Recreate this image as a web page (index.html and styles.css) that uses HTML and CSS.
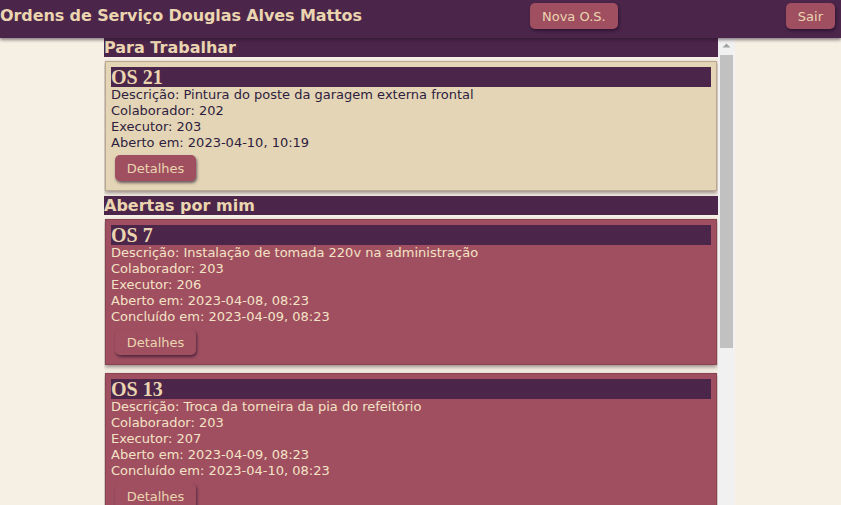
FILE: index.html
```html
<!DOCTYPE html>
<html lang="pt-BR">
<head>
<meta charset="utf-8">
<title>Ordens de Serviço</title>
<link rel="stylesheet" href="styles.css">
</head>
<body>
<header class="topbar">
  <h1 class="app-title">Ordens de Serviço Douglas Alves Mattos</h1>
  <button class="btn">Nova O.S.</button>
  <button class="btn">Sair</button>
</header>
<div class="viewport">
  <main class="board">
    <h2 class="section-title">Para Trabalhar</h2>
    <article class="card card-work">
      <h3 class="card-title">OS 21</h3>
      <p class="line">Descrição: Pintura do poste da garagem externa frontal</p>
      <p class="line">Colaborador: 202</p>
      <p class="line">Executor: 203</p>
      <p class="line">Aberto em: 2023-04-10, 10:19</p>
      <button class="btn btn-card">Detalhes</button>
    </article>
    <h2 class="section-title">Abertas por mim</h2>
    <article class="card card-mine">
      <h3 class="card-title">OS 7</h3>
      <p class="line">Descrição: Instalação de tomada 220v na administração</p>
      <p class="line">Colaborador: 203</p>
      <p class="line">Executor: 206</p>
      <p class="line">Aberto em: 2023-04-08, 08:23</p>
      <p class="line">Concluído em: 2023-04-09, 08:23</p>
      <button class="btn btn-card">Detalhes</button>
    </article>
    <article class="card card-mine">
      <h3 class="card-title">OS 13</h3>
      <p class="line">Descrição: Troca da torneira da pia do refeitório</p>
      <p class="line">Colaborador: 203</p>
      <p class="line">Executor: 207</p>
      <p class="line">Aberto em: 2023-04-09, 08:23</p>
      <p class="line">Concluído em: 2023-04-10, 08:23</p>
      <button class="btn btn-card">Detalhes</button>
    </article>
  </main>
  <div class="scrollbar" aria-hidden="true">
    <div class="scroll-arrow">
      <svg width="17" height="17" viewBox="0 0 17 17"><polygon points="4.5,9.5 12.5,9.5 8.5,5.5" fill="#a3a3a3"/></svg>
    </div>
    <div class="scroll-thumb"></div>
  </div>
</div>
</body>
</html>
```
FILE: styles.css
```css
html, body {
  margin: 0;
  padding: 0;
  height: 100%;
  overflow: hidden;
}
body {
  background: #f6efe3;
  font-family: "DejaVu Sans", Verdana, sans-serif;
  font-size: 13px;
}
.topbar {
  position: relative;
  z-index: 2;
  height: 38px;
  background: #4b254a;
  box-shadow: 0 2px 3px rgba(40, 20, 40, 0.5);
  display: flex;
  align-items: flex-start;
  justify-content: space-between;
  padding-right: 6px;
}
.app-title {
  margin: 0;
  padding-top: 5px;
  font-size: 16px;
  line-height: 22px;
  font-weight: bold;
  letter-spacing: -0.1px;
  color: #ead5b0;
}
.btn {
  font-family: "DejaVu Sans", Verdana, sans-serif;
  font-size: 13px;
  color: #ead5b0;
  background: #a04f60;
  border: none;
  border-radius: 5px;
  padding: 0 12px;
  height: 26px;
  margin-top: 3px;
  box-shadow: 1px 2px 3px rgba(30, 10, 40, 0.6);
}
.viewport {
  display: flex;
  width: 631px;
  height: 480px;
  margin-left: 104px;
}
.board {
  flex: 1;
  min-width: 0;
  overflow: hidden;
}
.scrollbar {
  flex: 0 0 17px;
  background: #f1f1f1;
  display: flex;
  flex-direction: column;
}
.scroll-arrow {
  height: 17px;
}
.scroll-arrow svg {
  display: block;
}
.scroll-thumb {
  height: 293px;
  margin: 0 2px;
  background: #c1c1c1;
}
.section-title {
  margin: 0;
  background: #4b254a;
  color: #ead5b0;
  font-size: 16px;
  line-height: 19px;
  font-weight: bold;
}
.card {
  margin: 4px 1px 5px 1px;
  padding: 5px 5px 9px 5px;
  border: 1px solid rgba(60, 30, 40, 0.25);
  box-shadow: 0 2px 4px rgba(40, 20, 30, 0.45);
}
.card-work {
  background: #e4d5b6;
  color: #2e1d3e;
}
.card-mine {
  background: #a04f60;
  color: #f3e3c6;
}
.card + .card {
  margin-top: 8px;
}
.card-title {
  margin: 0;
  background: #4b254a;
  color: #ead5b0;
  font-family: "Liberation Serif", "Times New Roman", serif;
  font-weight: bold;
  font-size: 20px;
  line-height: 20px;
}
.line {
  margin: 0;
  line-height: 16px;
}
.btn-card {
  margin: 4px 0 0 4px;
  width: 81px;
  padding: 0;
}
```
